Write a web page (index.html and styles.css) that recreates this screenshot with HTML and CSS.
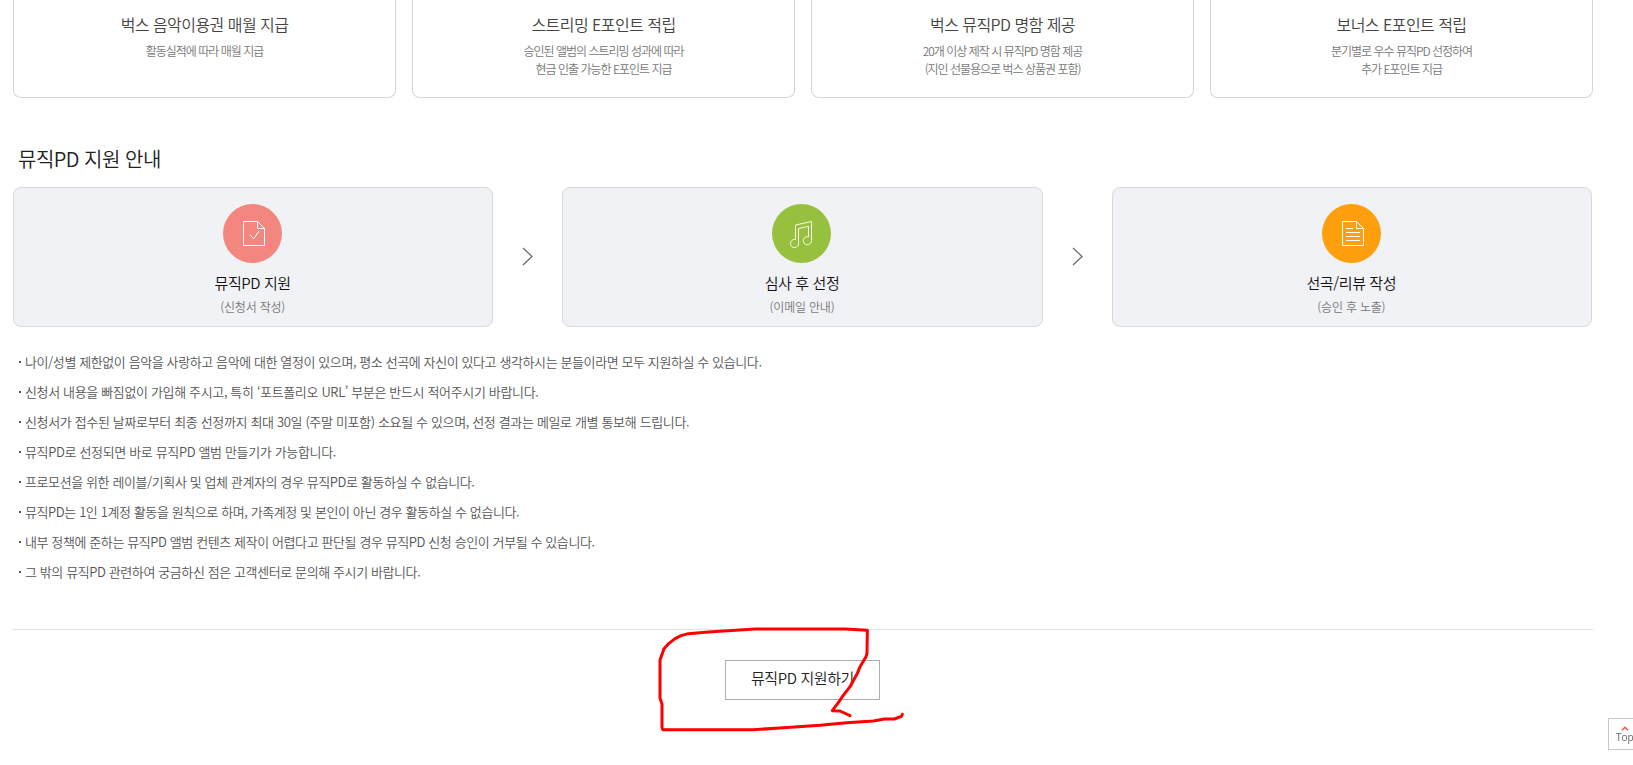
FILE: index.html
```html
<!DOCTYPE html>
<html lang="ko">
<head>
    <meta charset="UTF-8">
    <meta name="viewport" content="width=device-width, initial-scale=1.0">
    <title>뮤직PD 지원 안내</title>
    <link rel="stylesheet" href="styles.css">
</head>
<body>
    <div class="container">
        <ul class="benefits">
            <li class="benefit">
                <h3>벅스 음악이용권 매월 지급</h3>
                <p>활동실적에 따라 매월 지급</p>
            </li>
            <li class="benefit">
                <h3>스트리밍 E포인트 적립</h3>
                <p>승인된 앨범의 스트리밍 성과에 따라<br>현금 인출 가능한 E포인트 지급</p>
            </li>
            <li class="benefit">
                <h3>벅스 뮤직PD 명함 제공</h3>
                <p>20개 이상 제작 시 뮤직PD 명함 제공<br>(지인 선물용으로 벅스 상품권 포함)</p>
            </li>
            <li class="benefit">
                <h3>보너스 E포인트 적립</h3>
                <p>분기별로 우수 뮤직PD 선정하여<br>추가 E포인트 지급</p>
            </li>
        </ul>

        <h2>뮤직PD 지원 안내</h2>

        <div class="steps">
            <div class="step">
                <svg class="step-icon" width="59" height="59" viewBox="0 0 59 59">
                    <circle cx="29.5" cy="29.5" r="29.5" fill="#f3867f"/>
                    <g fill="none" stroke="#fff">
                        <path d="M20.5 17.5h14l7 7v17h-21z"/>
                        <path d="M34.5 17.5v7h7"/>
                        <path d="M27 30.5l3.5 4.5 5.5-8"/>
                    </g>
                </svg>
                <strong>뮤직PD 지원</strong>
                <span>(신청서 작성)</span>
            </div>
            <svg class="arrow" width="12" height="19" viewBox="0 0 12 19">
                <path d="M1 1l9 8.5L1 18" fill="none" stroke="#666" stroke-width="1.2"/>
            </svg>
            <div class="step">
                <svg class="step-icon" width="59" height="59" viewBox="0 0 59 59">
                    <circle cx="29.5" cy="29.5" r="29.5" fill="#97c03e"/>
                    <g fill="none" stroke="#fff" stroke-opacity="0.9">
                        <path d="M23.5 35.8V21l16-3.5V37a4.1 4.1 0 1 1-3-4.2V22.3l-10 2.2v14a4.1 4.1 0 1 1-3-3"/>
                    </g>
                </svg>
                <strong>심사 후 선정</strong>
                <span>(이메일 안내)</span>
            </div>
            <svg class="arrow" width="12" height="19" viewBox="0 0 12 19">
                <path d="M1 1l9 8.5L1 18" fill="none" stroke="#666" stroke-width="1.2"/>
            </svg>
            <div class="step">
                <svg class="step-icon" width="59" height="59" viewBox="0 0 59 59">
                    <circle cx="29.5" cy="29.5" r="29.5" fill="#ff9f0e"/>
                    <g fill="none" stroke="#fff">
                        <path d="M20.5 17.5h14l7 7v17h-21z"/>
                        <path d="M34.5 17.5v7h7"/>
                        <path d="M24 24.5h7M24 28.5h14M24 32.5h14M24 36.5h14"/>
                    </g>
                </svg>
                <strong>선곡/리뷰 작성</strong>
                <span>(승인 후 노출)</span>
            </div>
        </div>

        <ul class="notes">
            <li>나이/성별 제한없이 음악을 사랑하고 음악에 대한 열정이 있으며, 평소 선곡에 자신이 있다고 생각하시는 분들이라면 모두 지원하실 수 있습니다.</li>
            <li>신청서 내용을 빠짐없이 가입해 주시고, 특히 ‘포트폴리오 URL’ 부분은 반드시 적어주시기 바랍니다.</li>
            <li>신청서가 접수된 날짜로부터 최종 선정까지 최대 30일 (주말 미포함) 소요될 수 있으며, 선정 결과는 메일로 개별 통보해 드립니다.</li>
            <li>뮤직PD로 선정되면 바로 뮤직PD 앨범 만들기가 가능합니다.</li>
            <li>프로모션을 위한 레이블/기획사 및 업체 관계자의 경우 뮤직PD로 활동하실 수 없습니다.</li>
            <li>뮤직PD는 1인 1계정 활동을 원칙으로 하며, 가족계정 및 본인이 아닌 경우 활동하실 수 없습니다.</li>
            <li>내부 정책에 준하는 뮤직PD 앨범 컨텐츠 제작이 어렵다고 판단될 경우 뮤직PD 신청 승인이 거부될 수 있습니다.</li>
            <li>그 밖의 뮤직PD 관련하여 궁금하신 점은 고객센터로 문의해 주시기 바랍니다.</li>
        </ul>

        <div class="apply">
            <a class="apply-btn" href="#">뮤직PD 지원하기</a>
            <!-- 손으로 그린 강조 표시 -->
            <svg class="marker" width="280" height="140" viewBox="0 0 840 420">
                <path d="M787 313L784 319L763 327L733 327L700 333L620 338L540 346L420 354L340 359L68 359L66 352L66 282L60 265L60 150L72 116L87 100L105 86L125 76L145 71L205 66L345 57L615 57L682 61L681 130L678 140L660 170L653 188L630 230L607 260L597 275L577 302L600 303L630 317"/>
            </svg>
        </div>
    </div>

    <a class="top-btn" href="#">
        <svg width="8" height="5" viewBox="0 0 8 5"><path d="M1 4.2L4 1.2l3 3" fill="none" stroke="#f0554d" stroke-width="1.5"/></svg>
        Top
    </a>
</body>
</html>
```

FILE: styles.css
```css
* {
    margin: 0;
    padding: 0;
    box-sizing: border-box;
}

body {
    height: 765px;
    overflow: hidden;
    background-color: #fff;
    color: #333;
    font-family: 'Noto Sans CJK KR', sans-serif;
    font-weight: 350;
}

ul {
    list-style: none;
}

.container {
    width: 1580px;
    margin-left: 13px;
}

/* 혜택 카드 */
.benefits {
    display: flex;
    gap: 16px;
}

.benefit {
    flex: 1;
    height: 98px;
    padding-top: 12px;
    border: 1px solid #d6d6d6;
    border-top: 0;
    border-radius: 0 0 8px 8px;
    text-align: center;
}

.benefit h3 {
    font-size: 16px;
    font-weight: 350;
    line-height: 24px;
    letter-spacing: -0.55px;
    color: #444;
}

.benefit p {
    margin-top: 6px;
    font-size: 12px;
    line-height: 18px;
    letter-spacing: -1.05px;
    word-spacing: 0.2px;
    color: #777;
}

h2 {
    margin: 46px 0 13px 5px;
    font-size: 20px;
    font-weight: 350;
    line-height: 30px;
    letter-spacing: -0.5px;
    color: #222;
}

/* 지원 절차 */
.steps {
    display: flex;
    align-items: center;
    width: 1579px;
}

.step {
    flex: 1;
    display: flex;
    flex-direction: column;
    align-items: center;
    height: 140px;
    padding: 16px 1px 0 0;
    border: 1px solid #d8d9db;
    border-radius: 8px;
    background-color: #f1f2f6;
}

.step-icon {
    display: block;
}

.step strong {
    margin-top: 9px;
    font-size: 15px;
    font-weight: 350;
    line-height: 22px;
    letter-spacing: -0.4px;
    color: #111;
}

.step span {
    margin-top: 3px;
    font-size: 12px;
    line-height: 20px;
    letter-spacing: -0.2px;
    color: #777;
}

.arrow {
    flex: none;
    margin: -2px 28px 0 29px;
}

/* 유의사항 */
.notes {
    margin-top: 19px;
    padding-left: 6px;
}

.notes li {
    display: flex;
    align-items: center;
    height: 30px;
    font-size: 13px;
    letter-spacing: -0.4px;
    color: #555;
}

.notes li:nth-child(2),
.notes li:nth-child(3),
.notes li:nth-child(4) {
    letter-spacing: -0.35px;
}

.notes li::before {
    content: '';
    width: 2px;
    height: 2px;
    margin: 1px 4px 0 0;
    background-color: #555;
}

.apply {
    position: relative;
    display: flex;
    justify-content: center;
    margin-top: 43px;
    padding: 30px 1px 0 0;
    border-top: 1px solid #e2e2e2;
}

.apply-btn {
    width: 155px;
    height: 40px;
    border: 1px solid #adadad;
    font-size: 15px;
    line-height: 33px;
    letter-spacing: -0.4px;
    text-align: center;
    text-decoration: none;
    color: #222;
}

.marker {
    position: absolute;
    left: 627px;
    top: -20px;
    fill: none;
    stroke: #f00;
    stroke-width: 9;
    stroke-linecap: round;
    stroke-linejoin: round;
}

.top-btn {
    position: fixed;
    left: 1608px;
    top: 718px;
    width: 32px;
    height: 32px;
    padding: 1px 0 0 7px;
    border: 1px solid #c6c6cc;
    font-family: 'Open Sans', sans-serif;
    font-size: 10px;
    font-weight: 400;
    line-height: 12px;
    text-decoration: none;
    color: #666;
}

.top-btn svg {
    display: block;
    margin: 6px 0 0 5px;
}
```
